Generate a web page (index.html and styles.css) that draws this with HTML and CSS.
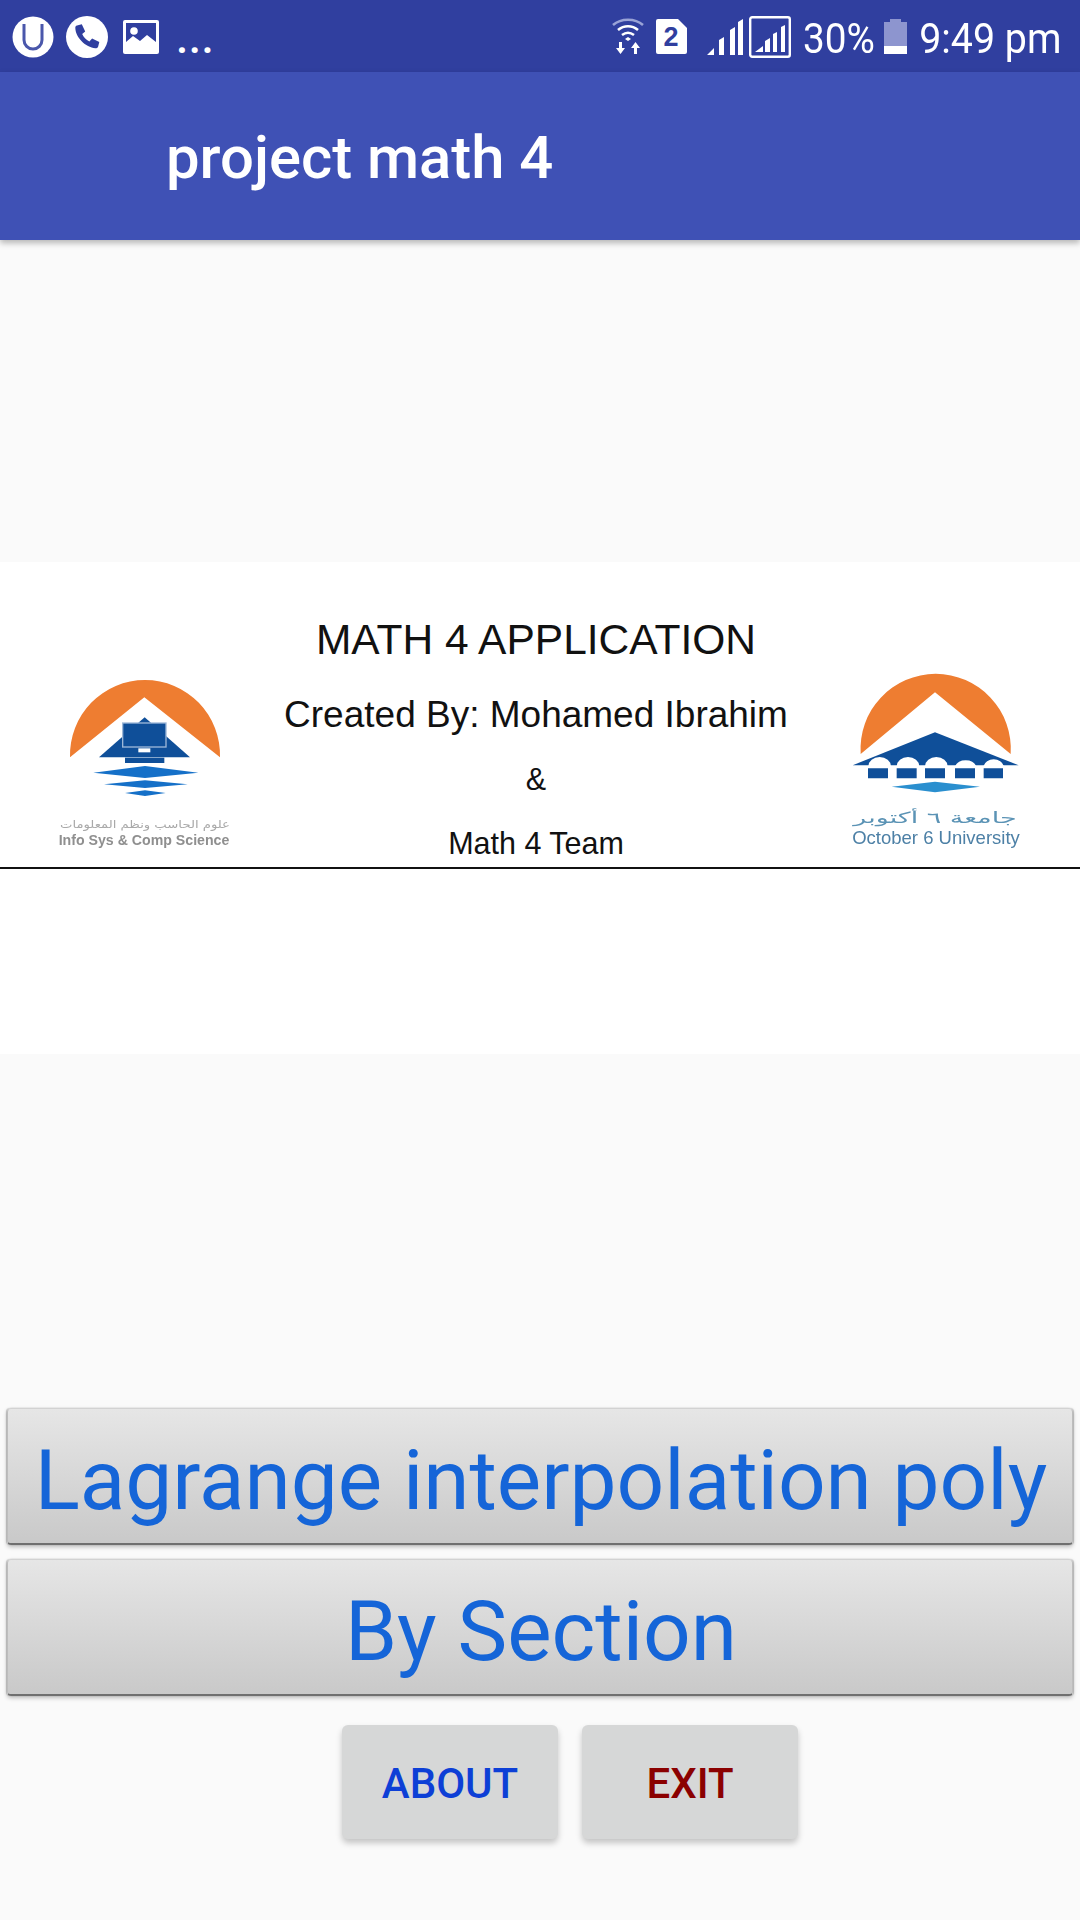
FILE: index.html
```html
<!DOCTYPE html>
<html lang="en">
<head>
<meta charset="utf-8">
<title>project math 4</title>
<link rel="stylesheet" href="styles.css">
</head>
<body>
<div class="page">
  <header class="status">
    <div class="status-left">
      <svg class="ic-u" viewBox="0 0 42 42"><circle cx="21" cy="21" r="20.500" fill="#fff"/><path d="M12 8v16a9 9 0 0 0 18 0V8" fill="none" stroke="#4a57ab" stroke-width="3"/></svg>
      <svg class="ic-phone" viewBox="0 0 42 42"><circle cx="21" cy="21" r="21" fill="#fff"/><path d="M11 9.500l4.800-1.300 3.400 7.300-3 2.600c1.300 3.300 3.800 5.800 7.200 7.400l2.700-3 7.200 3.500-1.200 4.700c-.5 1.200-1.500 1.500-2.700 1.500C19.500 31.500 9.500 21.500 9.300 11.800c0-1.100.6-2 1.700-2.300z" fill="#303f9f"/></svg>
      <svg class="ic-img" viewBox="0 0 36 34"><rect width="36" height="34" rx="2" fill="#fff"/><rect x="3" y="3" width="30" height="28" fill="#303f9f"/><circle cx="11" cy="11" r="3.800" fill="#fff"/><path d="M3 22l7-6 7 5 7-6 9 7v9H3z" fill="#fff"/></svg>
      <span class="dots">...</span>
    </div>
    <div class="status-right">
      <svg class="ic-wifi" viewBox="0 0 32 36"><path d="M1 7C9 0 23 0 31 7" fill="none" stroke="#9aa3d6" stroke-width="2.600"/><path d="M6 12c6-5 14-5 20 0" fill="none" stroke="#fff" stroke-width="2.600"/><path d="M10 17c4-3 8-3 12 0" fill="none" stroke="#fff" stroke-width="2.600"/><path d="M13 21l3-2 3 2-3 2z" fill="#fff"/><path d="M7 24h3v6h3l-4.500 6L4 30h3zM22 36h3v-6h3l-4.500-6-4.500 6h3z" fill="#fff"/></svg>
      <svg class="ic-sim" viewBox="0 0 31 35"><path d="M2 0h20l9 9v24a2 2 0 0 1-2 2H2a2 2 0 0 1-2-2V2a2 2 0 0 1 2-2z" fill="#fff"/><text x="15" y="27" class="sim-num">2</text></svg>
      <svg class="ic-signal" viewBox="0 0 36 36"><path d="M0 36l7-7v7zM12 36V21l5-3v18zM23 36V11l5-3v28zM31 36V3l5-3v36z" fill="#fff"/></svg>
      <svg class="ic-box" viewBox="0 0 42 42"><rect x="1.200" y="1.200" width="39.600" height="39.600" rx="2" fill="none" stroke="#fff" stroke-width="2.400"/><path d="M6 36l8-6v6zM16 36V25l5-3v14zM24 36V18l4-2v20zM32 36V11l4-2v27z" fill="#fff"/></svg>
      <span class="pct">30%</span>
      <svg class="ic-batt" viewBox="0 0 23 35"><path d="M0 3h6V0h11v3h6v32H0z" fill="#8d95cf"/><rect y="27" width="23" height="8" fill="#fff"/></svg>
      <span class="clock">9:49 pm</span>
    </div>
  </header>
  <div class="appbar"><h1 class="title">project math 4</h1></div>
  <main class="content">
    <section class="banner">
      <div class="banner-top">
        <svg class="logo" viewBox="0 0 690 654">
          <path d="M120 325A225.100 225.100 0 1 1 570 325L343 145z" fill="#ee7d31"/>
          <path d="M207 325L344 205 480 325z" fill="#0f4f99"/>
          <rect x="278" y="222" width="130" height="72" fill="#0f4f99" stroke="#9db8d8" stroke-width="4"/>
          <rect x="325" y="298" width="36" height="12" fill="#fff"/>
          <rect x="285" y="326" width="118" height="16" fill="#0f4f99"/>
          <path d="M190 371l155-20 160 20-160 16zM222 406l123-12 128 12-128 11zM285 432l60-8 62 8-62 9z" fill="#1570c8"/>
          <text x="345" y="536" class="logo-ar logo-ar-l" textLength="510" lengthAdjust="spacingAndGlyphs">علوم الحاسب ونظم المعلومات</text>
          <text x="342" y="588" class="logo-en logo-en-l">Info Sys &amp; Comp Science</text>
        </svg>
        <div class="banner-text">
          <p class="b-title">MATH 4 APPLICATION</p>
          <p class="b-by">Created By: Mohamed Ibrahim</p>
          <p class="b-amp">&amp;</p>
          <p class="b-team">Math 4 Team</p>
        </div>
        <svg class="logo" viewBox="0 0 690 654">
          <path d="M122 315A225.500 225.500 0 1 1 572 315L345 130z" fill="#ee7d31"/>
          <path d="M98 349L345 250 596 349z" fill="#0f4f99"/>
          <path d="M145 352a34 28 0 0 1 68 0zM230 352a34 28 0 0 1 68 0zM315 352a34 28 0 0 1 68 0zM405 352a34 28 0 0 1 64 0zM490 352a32 28 0 0 1 62 0z" fill="#fff"/>
          <path d="M144 358h60v30h-60zM230 358h60v30h-60zM315 358h60v30h-60zM405 358h60v30h-60zM491 358h58v30h-58z" fill="#0f4f99"/>
          <path d="M215 413l130-15 135 15-135 17z" fill="#2a8fcf"/>
          <text x="345" y="522" class="logo-ar logo-ar-r" textLength="490" lengthAdjust="spacingAndGlyphs">جامعة ٦ أكتوبر</text>
          <text x="348" y="586" class="logo-en logo-en-r">October 6 University</text>
        </svg>
      </div>
      <div class="banner-bottom"></div>
    </section>
    <div class="actions">
      <button class="big-btn">Lagrange interpolation poly</button>
      <button class="big-btn">By Section</button>
      <div class="small-row">
        <button class="small-btn about">ABOUT</button>
        <button class="small-btn exit">EXIT</button>
      </div>
    </div>
  </main>
</div>
</body>
</html>
```

FILE: styles.css
```css
* { box-sizing: border-box; }
html, body { margin: 0; padding: 0; }
body { background: #fafafa; font-family: Roboto, sans-serif; }
.page { width: 1080px; height: 1920px; display: flex; flex-direction: column; overflow: hidden; }

.status { height: 72px; flex: none; background: #303f9f; display: flex; justify-content: space-between; color: #fff; }
.status-left, .status-right { display: flex; align-items: flex-start; }
.status-left { padding-left: 12px; }
.status-right { padding-right: 19px; }
.status svg { display: block; flex: none; }
.ic-u { width: 42px; height: 42px; margin-top: 16px; }
.ic-phone { width: 42px; height: 42px; margin-top: 16px; margin-left: 12px; }
.ic-img { width: 36px; height: 34px; margin-top: 20px; margin-left: 15px; }
.dots { font-size: 44px; font-weight: 500; line-height: 46px; margin-top: 15px; margin-left: 17px; letter-spacing: .5px; }
.ic-wifi { width: 32px; height: 36px; margin-top: 18px; }
.ic-sim { width: 31px; height: 35px; margin-top: 19px; margin-left: 12px; }
.sim-num { font: 700 27px "Liberation Sans", sans-serif; fill: #303f9f; text-anchor: middle; }
.ic-signal { width: 36px; height: 36px; margin-top: 19px; margin-left: 20px; }
.ic-box { width: 42px; height: 42px; margin-top: 16px; margin-left: 6px; }
.pct { font-size: 43px; line-height: 46px; margin-top: 15px; margin-left: 4px; transform: scaleX(.9); transform-origin: right center; }
.ic-batt { width: 23px; height: 35px; margin-top: 19px; margin-left: 9px; }
.clock { font-size: 43px; line-height: 46px; margin-top: 15px; margin-left: -1px; transform: scaleX(.915); transform-origin: right center; white-space: nowrap; }

.appbar { height: 168px; flex: none; background: #3f51b5; box-shadow: 0 3px 6px rgba(0,0,0,.28); display: flex; align-items: center; padding-left: 166px; padding-top: 3px; position: relative; }
.title { margin: 0; color: #fff; font-size: 59.800px; font-weight: 500; line-height: 66px; }

.content { flex: 1; display: flex; flex-direction: column; padding-top: 322px; padding-bottom: 81px; }
.banner { background: #fff; height: 492px; flex: none; }
.banner-top { height: 307px; border-bottom: 2px solid #111; display: flex; justify-content: space-between; align-items: flex-end; padding: 0 30px; }
.logo { width: 230px; height: 218px; flex: none; display: block; filter: blur(.6px); }
.logo-ar { font-family: "DejaVu Sans", sans-serif; text-anchor: middle; }
.logo-ar-l { font-size: 32px; fill: #a9a9a9; }
.logo-ar-r { font-size: 46px; fill: #5b93b5; }
.logo-en { font-family: "Liberation Sans", sans-serif; text-anchor: middle; }
.logo-en-l { font-size: 42.500px; font-weight: 700; fill: #8f8f8f; }
.logo-en-r { font-size: 55.500px; fill: #4d80a6; }
.banner-text { flex: 1; height: 100%; display: flex; flex-direction: column; align-items: center; font-family: "Liberation Sans", sans-serif; color: #111; margin-right: 8px; }
.banner-text p { margin: 0; white-space: nowrap; }
.b-title { font-size: 42.500px; line-height: 46px; margin-top: 55px !important; }
.b-by { font-size: 37px; line-height: 40px; margin-top: 32px !important; }
.b-amp { font-size: 30.500px; line-height: 32px; margin-top: 28px !important; }
.b-team { font-size: 30.500px; line-height: 32px; margin-top: 32px !important; }
.banner-bottom { height: 185px; }

.actions { margin-top: auto; display: flex; flex-direction: column; align-items: center; }
.big-btn { width: 1066px; height: 137px; padding: 7px 0 0 2px; border: 1px solid #bdbdbd; border-top-color: #d2d2d2; border-bottom: 2px solid #6f6f6f; border-radius: 4px; background: linear-gradient(#e6e6e6, #c9c9c9); box-shadow: 0 2px 4px rgba(0,0,0,.25), -1px 0 1px rgba(0,0,0,.2), 1px 0 1px rgba(0,0,0,.2); color: #1565d8; font-family: Roboto, sans-serif; font-size: 83.700px; line-height: 100px; }
.big-btn + .big-btn { margin-top: 14px; }
.small-row { display: flex; gap: 24px; margin-top: 29px; margin-left: 60px; }
.small-btn { width: 216px; height: 114px; padding: 2px 0 0; border: 0; border-radius: 6px; background: #d6d7d7; box-shadow: 0 4px 6px rgba(0,0,0,.22); font-family: Roboto, sans-serif; font-size: 42px; font-weight: 500; }
.about { color: #0d3fd6; }
.exit { color: #8b0000; }
```
